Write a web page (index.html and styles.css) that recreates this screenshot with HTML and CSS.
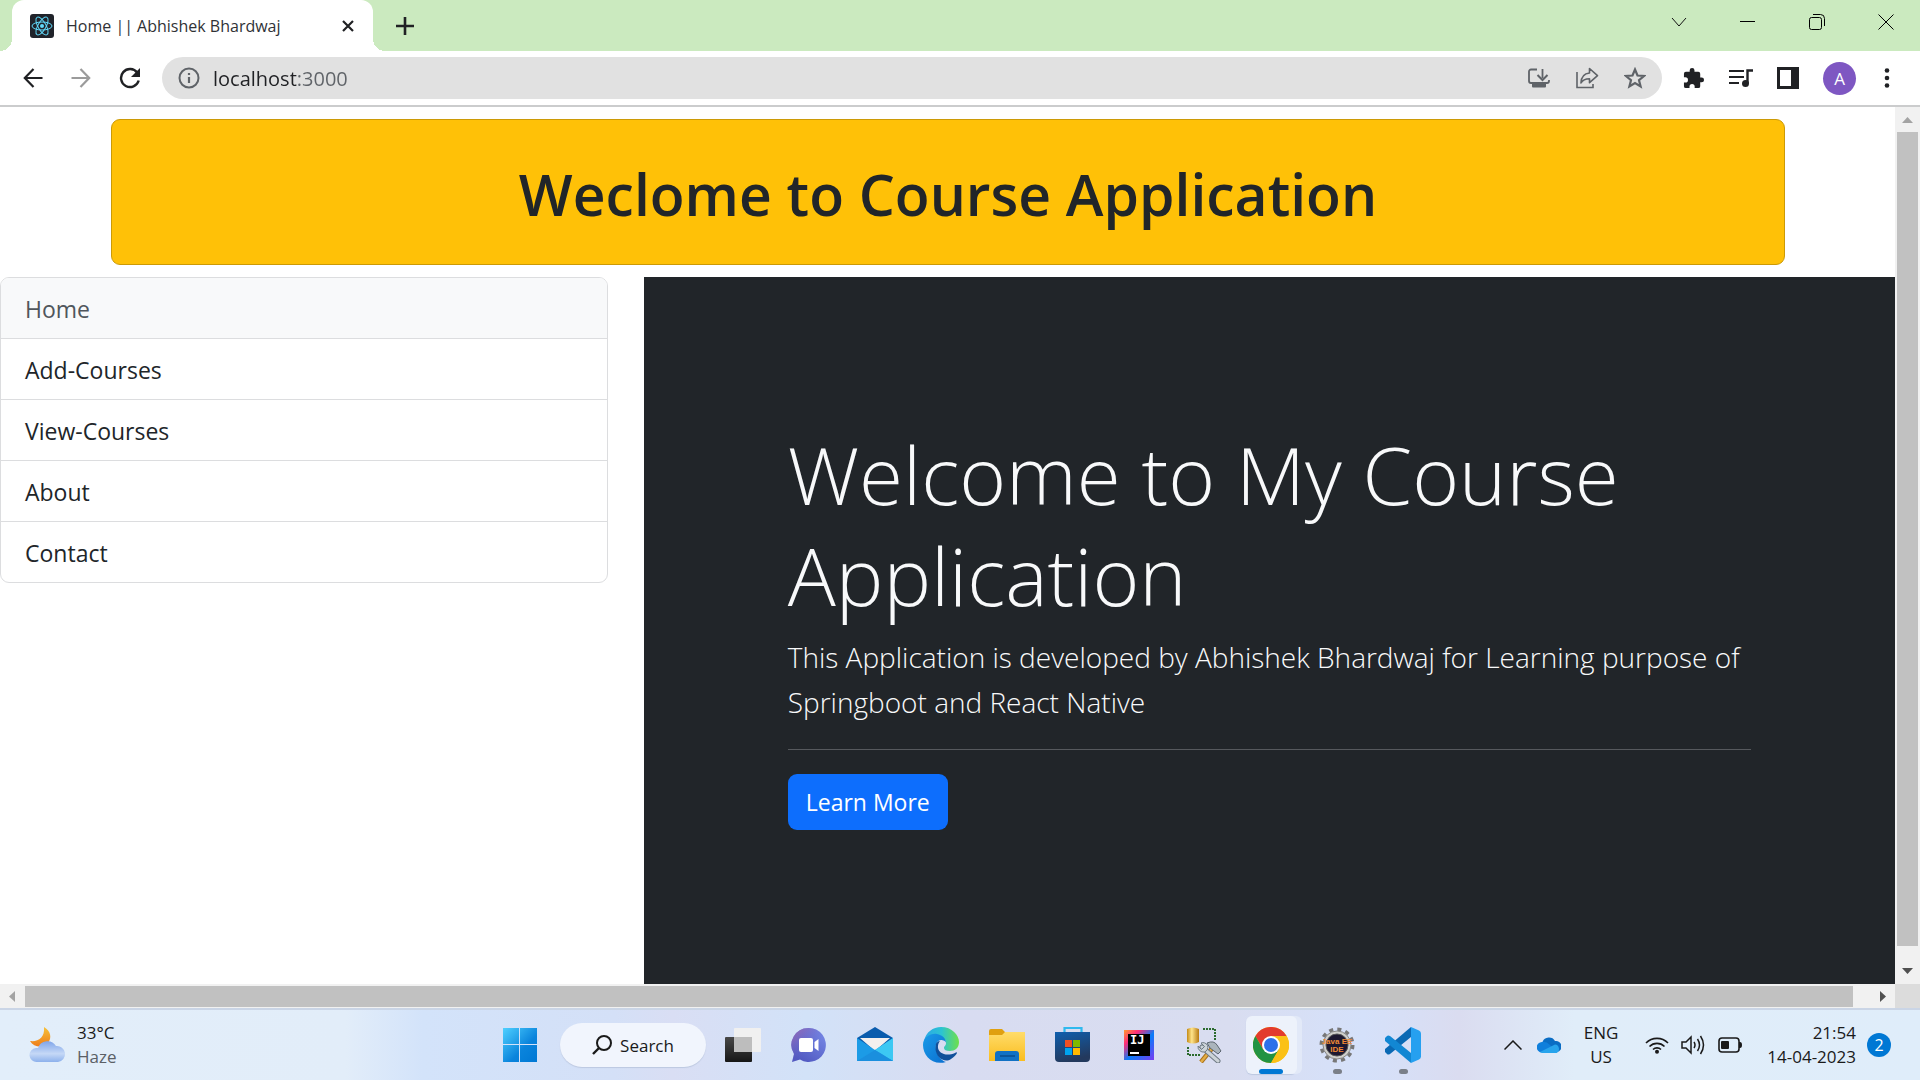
FILE: index.html
```html
<!DOCTYPE html>
<html lang="en">
<head>
<meta charset="utf-8">
<title>Home || Abhishek Bhardwaj</title>
<link rel="stylesheet" href="styles.css">
</head>
<body>
<div class="desktop">
  <header class="browser">
    <div class="tabstrip">
      <div class="tab">
        <svg class="favicon" viewBox="0 0 24 24" aria-hidden="true"><rect width="24" height="24" rx="3" fill="#20232a"/><g fill="none" stroke="#61dafb" stroke-width="1"><ellipse cx="12" cy="12" rx="10" ry="4"/><ellipse cx="12" cy="12" rx="10" ry="4" transform="rotate(60 12 12)"/><ellipse cx="12" cy="12" rx="10" ry="4" transform="rotate(120 12 12)"/></g><circle cx="12" cy="12" r="2" fill="#61dafb"/></svg>
        <span class="tab-title">Home || Abhishek Bhardwaj</span>
        <button class="icon-btn" aria-label="Close tab"><svg width="14" height="14" viewBox="0 0 14 14"><path d="M2 2l10 10M12 2L2 12" stroke="#202124" stroke-width="2.2" fill="none"/></svg></button>
      </div>
      <button class="icon-btn new-tab" aria-label="New tab"><svg width="20" height="20" viewBox="0 0 20 20"><path d="M10 1v18M1 10h18" stroke="#202124" stroke-width="2.6" fill="none"/></svg></button>
      <div class="window-buttons">
        <button class="win-btn" aria-label="Search tabs"><svg width="16" height="16" viewBox="0 0 16 16"><path d="M1 4l7 8 7-8" stroke="#111" fill="none"/></svg></button>
        <button class="win-btn" aria-label="Minimize"><svg width="16" height="16" viewBox="0 0 16 16"><path d="M0 7.500h15" stroke="#000" fill="none"/></svg></button>
        <button class="win-btn" aria-label="Restore"><svg width="16" height="16" viewBox="0 0 16 16"><g stroke="#000" fill="none"><rect x=".5" y="3.500" width="12" height="12" rx="2"/><path d="M4 .5h7.500a4 4 0 0 1 4 4V12"/></g></svg></button>
        <button class="win-btn" aria-label="Close"><svg width="16" height="16" viewBox="0 0 16 16"><path d="M.5.500l15 15M15.500.500l-15 15" stroke="#000" fill="none"/></svg></button>
      </div>
    </div>
    <div class="toolbar">
      <div class="nav-buttons">
        <button class="icon-btn" aria-label="Back"><svg width="20" height="20" viewBox="0 0 20 20"><path d="M19.500 10H2M10.500 1L1.800 10l8.700 9" stroke="#202124" stroke-width="2.200" fill="none"/></svg></button>
        <button class="icon-btn" aria-label="Forward"><svg width="20" height="20" viewBox="0 0 20 20"><path d="M.5 10H18M9.500 1l8.700 9-8.700 9" stroke="#9b9b9b" stroke-width="2.200" fill="none"/></svg></button>
        <button class="icon-btn" aria-label="Reload"><svg width="22" height="22" viewBox="0 0 22 22"><path d="M18.300 5.700A9 9 0 1 0 19.700 13.500" stroke="#202124" stroke-width="2.400" fill="none"/><path d="M21 1v9h-9z" fill="#202124"/></svg></button>
      </div>
      <div class="omnibox">
        <svg width="22" height="22" viewBox="0 0 22 22" aria-hidden="true"><circle cx="11" cy="11" r="9.500" stroke="#5f6368" stroke-width="2" fill="none"/><path d="M11 10v6M11 6v2" stroke="#5f6368" stroke-width="2.200"/></svg>
        <input class="address" aria-label="Address" value="localhost:3000">
        <button class="icon-btn" aria-label="Install app"><svg width="22" height="22" viewBox="0 0 22 22"><path d="M9 2.500H3a2 2 0 0 0-2 2V14a2 2 0 0 0 2 2h16a2 2 0 0 0 2-2v-1M14.500 2v9" stroke="#5f6368" stroke-width="1.800" fill="none"/><path d="M9.500 8l5 5 5-5" stroke="#5f6368" stroke-width="2" fill="none"/><path d="M4 17h14v2.500a1 1 0 0 1-1 1H5a1 1 0 0 1-1-1z" fill="#5f6368"/></svg></button>
        <button class="icon-btn" aria-label="Share"><svg width="24" height="22" viewBox="0 0 24 22"><path d="M2 5v15.500h16V17" stroke="#5f6368" stroke-width="1.600" fill="none"/><path d="M14.500 1.500l8 7.200-8 7v-4c-4.500 0-7 1.300-8.500 4.300.2-5.500 3-9.500 8.500-10z" stroke="#5f6368" stroke-width="1.600" fill="none" stroke-linejoin="round"/></svg></button>
        <button class="icon-btn" aria-label="Bookmark"><svg width="22" height="22" viewBox="0 0 22 22"><path d="M11 2.500l2.500 6 6.500.5-5 4.200 1.600 6.300L11 16.100l-5.600 3.400L7 13.200 2 9l6.500-.5z" stroke="#5f6368" stroke-width="2.200" fill="none"/></svg></button>
      </div>
      <div class="actions">
        <button class="icon-btn" aria-label="Extensions"><svg width="22" height="22" viewBox="1 0 23 23"><path fill="#202124" d="M20.500 11H19V7a2 2 0 0 0-2-2h-4V3.500a2.500 2.500 0 0 0-5 0V5H4a2 2 0 0 0-2 2v3.800h1.500a2.700 2.700 0 0 1 0 5.400H2V20a2 2 0 0 0 2 2h3.800v-1.500a2.700 2.700 0 0 1 5.400 0V22H17a2 2 0 0 0 2-2v-4h1.500a2.500 2.500 0 0 0 0-5z"/></svg></button>
        <button class="icon-btn" aria-label="Media controls"><svg width="24" height="20" viewBox="0 0 24 20"><path d="M0 3h15M0 9h15M0 15h10" stroke="#202124" stroke-width="2"/><path d="M18.500 15V2.500H24" stroke="#202124" stroke-width="2.400" fill="none"/><circle cx="16.500" cy="15.500" r="3.500" fill="#202124"/></svg></button>
        <button class="icon-btn" aria-label="Side panel"><svg width="22" height="22" viewBox="0 0 22 22"><path fill="#202124" fill-rule="evenodd" d="M0 0h22v22H0zM3 3v16h11V3z"/></svg></button>
        <button class="icon-btn avatar" aria-label="Profile">A</button>
        <button class="icon-btn" aria-label="Menu"><svg width="6" height="20" viewBox="0 0 6 20"><g fill="#202124"><circle cx="3" cy="2.500" r="2.300"/><circle cx="3" cy="10" r="2.300"/><circle cx="3" cy="17.500" r="2.300"/></g></svg></button>
      </div>
    </div>
  </header>

  <div class="viewport">
    <main class="page">
      <div class="banner"><h1>Weclome to Course Application</h1></div>
      <div class="columns">
        <nav class="menu">
          <a class="current" href="#home">Home</a>
          <a href="#add">Add-Courses</a>
          <a href="#view">View-Courses</a>
          <a href="#about">About</a>
          <a href="#contact">Contact</a>
        </nav>
        <section class="hero">
          <h2>Welcome to My Course Application</h2>
          <p>This Application is developed by Abhishek Bhardwaj for Learning purpose of Springboot and React Native</p>
          <hr>
          <button class="learn">Learn More</button>
        </section>
      </div>
    </main>
    <div class="scroll-y">
      <svg width="25" height="25" viewBox="0 0 25 25"><path d="M7 16l5.500-6L18 16z" fill="#a3a3a3"/></svg>
      <div class="thumb"></div>
      <svg width="25" height="25" viewBox="0 0 25 25"><path d="M7 9l5.500 6L18 9z" fill="#505050"/></svg>
    </div>
    <div class="scroll-x">
      <svg width="25" height="24" viewBox="0 0 25 24"><path d="M15 7l-6 5.500 6 5.500z" fill="#a3a3a3"/></svg>
      <div class="thumb"></div>
      <svg width="25" height="24" viewBox="0 0 25 24"><path d="M10 7l6 5.500-6 5.500z" fill="#505050"/></svg>
    </div>
    <div class="corner"></div>
  </div>

  <footer class="taskbar">
    <div class="weather">
      <svg width="38" height="38" viewBox="0 0 38 38" aria-hidden="true"><defs><linearGradient id="moon" x2="0" y2="1"><stop offset="0" stop-color="#f6c23a"/><stop offset="1" stop-color="#ee7d1b"/></linearGradient><linearGradient id="cloud" x2="0" y2="1"><stop offset="0" stop-color="#7fa5ea"/><stop offset=".6" stop-color="#c5d8f6"/><stop offset="1" stop-color="#8db1ec"/></linearGradient></defs><path d="M15 1c7 4 8 11 4 16S5 22 1 15c8 1 15-3 14-14z" fill="url(#moon)"/><path d="M8 36a7 7 0 0 1-1-14h2a10 10 0 0 1 18-2 8 8 0 0 1 2 16z" fill="url(#cloud)"/></svg>
      <div class="stack"><span>33°C</span><span class="muted">Haze</span></div>
    </div>
    <div class="apps">
      <button class="app" aria-label="Start"><svg width="36" height="36" viewBox="0 0 36 36"><defs><linearGradient id="win" x2="1" y2="1"><stop offset="0" stop-color="#4fd0ff"/><stop offset=".6" stop-color="#0a84dc"/><stop offset="1" stop-color="#0078d4"/></linearGradient></defs><path fill="url(#win)" d="M1 1h16v16H1zM18 1h17v16H18zM1 18h16v17H1zM18 18h17v17H18z"/></svg></button>
      <button class="search"><svg width="20" height="20" viewBox="0 0 20 20" aria-hidden="true"><circle cx="12" cy="8" r="7" stroke="#1a1a1a" stroke-width="2" fill="none"/><path d="M7 13l-6 6" stroke="#1a1a1a" stroke-width="2.400"/></svg>Search</button>
      <button class="app" aria-label="Task view"><svg width="36" height="36" viewBox="0 0 36 36"><defs><linearGradient id="dk" x2="0" y2="1"><stop offset="0" stop-color="#484848"/><stop offset="1" stop-color="#161616"/></linearGradient></defs><rect y="10" width="27" height="25" rx="1" fill="url(#dk)"/><rect x="9" y="1" width="27" height="24" rx="1" fill="#f0f0f0"/><path d="M9 10h18v15H9z" fill="#bdbdbd"/></svg></button>
      <button class="app" aria-label="Chat"><svg width="36" height="36" viewBox="0 0 36 36"><defs><linearGradient id="ch" x1="1" x2="0.300" y2="1"><stop offset="0" stop-color="#7b8feb"/><stop offset="1" stop-color="#5058c0"/></linearGradient><linearGradient id="ch2" x2="1" y2="1"><stop offset="0" stop-color="#a268ae"/><stop offset=".6" stop-color="#5b5fc7" stop-opacity="0"/></linearGradient></defs><path d="M18 1a17 17 0 1 1-9 31.500L1 35l2-8A17 17 0 0 1 18 1z" fill="url(#ch)"/><path d="M18 1a17 17 0 1 1-9 31.500L1 35l2-8A17 17 0 0 1 18 1z" fill="url(#ch2)"/><rect x="8" y="11" width="14" height="14" rx="2" fill="#fff"/><path d="M23.500 15l4-3v12l-4-3z" fill="#fff"/></svg></button>
      <button class="app" aria-label="Mail"><svg width="36" height="36" viewBox="0 0 36 36"><path d="M0 11L18 0l18 11v10H0z" fill="#0a5cad"/><path d="M3 11h30L18 24z" fill="#f4f0ee"/><path d="M0 11l18 12 18-12v23H0z" fill="#1c9be6"/><path d="M36 11v23L18 23z" fill="#3cc8f3"/><path d="M0 34l18-11 18 11z" fill="#1a8fde"/></svg></button>
      <button class="app" aria-label="Edge"><svg width="36" height="36" viewBox="0 0 36 36"><defs><linearGradient id="e1" x2="1"><stop offset="0" stop-color="#2aa8e8"/><stop offset=".5" stop-color="#2cc3d2"/><stop offset="1" stop-color="#6ee04a"/></linearGradient><linearGradient id="e2" y2="1"><stop offset="0" stop-color="#1a9be8"/><stop offset="1" stop-color="#0a6fd0"/></linearGradient></defs><path d="M1 14C3 5 10 0 18 0c11 0 18 8 18 15 0 6-4 9-9 9-4 0-6-1-6-3s2-2 2-5c0-4-4-6-8-6-8 0-13 5-14 8z" fill="url(#e1)"/><path d="M0 18c0-8 8-12 14-11 5 1 9 4 9 9 0-2-3-3-5-3-3 0-6 4-5 9 1 7 6 12 10 13C9 39 0 28 0 18z" fill="url(#e2)"/><path d="M13 17c-3 12 8 20 15 15 3-2 5-4 6-6 0-1-1-1-2 0-9 4-18 0-17-7 0-3 2-5 2-5-2 0-4 2-4 3z" fill="#10509a"/></svg></button>
      <button class="app" aria-label="File Explorer"><svg width="36" height="36" viewBox="0 0 36 36"><defs><linearGradient id="fo" x2="0" y2="1"><stop offset="0" stop-color="#ffdc6a"/><stop offset="1" stop-color="#fabd1f"/></linearGradient></defs><path d="M0 4a2 2 0 0 1 2-2h11l3 3h18a2 2 0 0 1 2 2v6H0z" fill="#e0a010"/><path d="M0 8h13l3-3h20v29H0z" fill="url(#fo)"/><path d="M6 34V27a3 3 0 0 1 3-3h18a3 3 0 0 1 3 3v7z" fill="#1171c4"/><path d="M11 29h15" stroke="#0a4d8c" stroke-width="1.500"/></svg></button>
      <button class="app" aria-label="Store"><svg width="36" height="36" viewBox="0 0 36 36"><defs><linearGradient id="st" x2=".3" y2="1"><stop offset="0" stop-color="#0f5fae"/><stop offset="1" stop-color="#23395d"/></linearGradient></defs><path d="M9.500 6V1h17v5" fill="none" stroke="#2fb9ee" stroke-width="2.200"/><path d="M0 5h35v26a4 4 0 0 1-4 4H4a4 4 0 0 1-4-4z" fill="url(#st)"/><path d="M10 13h7v7h-7z" fill="#f25022"/><path d="M18 13h7v7h-7z" fill="#7fba00"/><path d="M10 21h7v7h-7z" fill="#00a4ef"/><path d="M18 21h7v7h-7z" fill="#ffb900"/></svg></button>
      <button class="app" aria-label="IntelliJ IDEA"><span class="intellij"><span>IJ</span></span></button>
      <button class="app" aria-label="Database tools"><svg width="36" height="36" viewBox="0 0 36 36"><defs><linearGradient id="db" x2="1"><stop offset="0" stop-color="#c48a15"/><stop offset=".4" stop-color="#ffe48a"/><stop offset="1" stop-color="#b87a10"/></linearGradient></defs><path d="M0 2q6-3 12 0v13q-6 3-12 0z" fill="url(#db)"/><path d="M16 2h12v12M1 20v8h12" fill="none" stroke="#2c6b2f" stroke-width="2" stroke-dasharray="2 1"/><path d="M27 19L14 35" stroke="#a8701a" stroke-width="4.500"/><path d="M27 19L14 35" stroke="#e3ad45" stroke-width="2.500"/><path d="M15 20l16 14" stroke="#6f7a84" stroke-width="5" stroke-linecap="round"/><path d="M15 20l16 14" stroke="#ccd3d8" stroke-width="3" stroke-linecap="round"/><path d="M14 16l3.500 3.500-3 3L11 19a5.500 5.500 0 0 0 6.500 6 5 5 0 0 0 3-6.500A5 5 0 0 0 14 16z" fill="#ccd3d8" stroke="#6f7a84"/><path d="M20 16q7-3 10 2l4 6-3 3-8-6z" fill="#aab4bc" stroke="#5c6670"/></svg></button>
      <button class="app active" aria-label="Chrome"><svg width="36" height="36" viewBox="0 0 36 36"><circle cx="18" cy="18" r="18" fill="#fbc116"/><path d="M2.400 9A18 18 0 0 1 33.600 9H18L10.200 22.500z" fill="#e33b2e"/><path d="M2.400 9A18 18 0 0 0 18 36l7.800-13.500H10.200z" fill="#229342"/><path d="M33.600 9A18 18 0 0 1 18 36l7.800-13.500L18 9z" fill="#fbc116"/><circle cx="18" cy="18" r="9" fill="#fff"/><circle cx="18" cy="18" r="7" fill="#2e71ea"/></svg></button>
      <button class="app running" aria-label="Java EE IDE"><svg width="36" height="36" viewBox="0 0 36 36"><circle cx="18" cy="18" r="15.500" fill="none" stroke="#777" stroke-width="4" stroke-dasharray="4 4.100"/><circle cx="18" cy="18" r="14" fill="#cfcfcb" stroke="#888"/><circle cx="18" cy="18" r="11" fill="#1d1830" stroke="#555"/><text x="18" y="17" class="gear-text">Java EE</text><text x="18" y="25" class="gear-text">IDE</text></svg></button>
      <button class="app running" aria-label="Visual Studio Code"><svg width="36" height="36" viewBox="0 0 36 36"><path d="M26 0v10L5 27q-2 1-3 0l-2-2q-1-1 0-3z" fill="#0a69b4"/><path d="M26 36V26L5 9Q3 8 2 9l-2 2q-1 1 0 3z" fill="#1287d3"/><path d="M26 0l8 3.500q2 1 2 3v23q0 2-2 3L26 36z" fill="#26a0f0"/></svg></button>
    </div>
    <div class="tray">
      <button class="icon-btn" aria-label="Hidden icons"><svg width="18" height="10" viewBox="0 0 18 10"><path d="M.5 9.500L9 1l8.500 8.500" stroke="#1a1a1a" stroke-width="1.500" fill="none"/></svg></button>
      <svg class="cloud" width="24" height="16" viewBox="0 0 24 16" aria-hidden="true"><path d="M6 15a5.500 5.500 0 0 1-.5-10A7 7 0 0 1 18 4a5.500 5.500 0 0 1 2 11z" fill="#0a6dc4"/><path d="M5 15.500A5 5 0 0 1 5 5q4-1 8 3l7 7.500z" fill="#0f7fdc"/><path d="M3 15l15-7.500a4.500 4.500 0 0 1 1.500 8.500H5z" fill="#28a4ec"/></svg>
      <div class="stack center lang"><span>ENG</span><span>US</span></div>
      <div class="status">
        <svg width="24" height="18" viewBox="0 0 24 18" aria-hidden="true"><g fill="none" stroke="#1a1a1a" stroke-width="1.600"><path d="M1 7a15.500 15.500 0 0 1 22 0M4.500 10.500a10.500 10.500 0 0 1 15 0M8 13.500a5.800 5.800 0 0 1 8 0"/></g><circle cx="12" cy="15.800" r="2" fill="#1a1a1a"/></svg>
        <svg width="25" height="20" viewBox="0 0 25 20" aria-hidden="true"><g fill="none" stroke="#1a1a1a" stroke-width="1.500"><path d="M1 7h4l5-5v16l-5-5H1z"/><path d="M13 7q2 3 0 6M16.500 4q4 6 0 12M19.500 1q6 9 0 18"/></g></svg>
        <svg width="24" height="16" viewBox="0 0 24 16" aria-hidden="true"><rect x="1" y="1" width="20" height="14" rx="3" fill="none" stroke="#1a1a1a" stroke-width="1.600"/><rect x="3" y="4" width="8" height="8" rx="1" fill="#1a1a1a"/><path d="M21 5h1q2 0 2 3t-2 3h-1z" fill="#1a1a1a"/></svg>
      </div>
      <div class="stack end clock"><span>21:54</span><span>14-04-2023</span></div>
      <span class="badge">2</span>
    </div>
  </footer>
</div>
</body>
</html>
```
FILE: styles.css
```css
* { box-sizing: border-box; }
body { margin: 0; font-family: "Open Sans", "Noto Sans", sans-serif; color: #212529; background: #fff; }
button { font: inherit; color: inherit; }

.desktop { display: grid; grid-template-rows: auto minmax(0, 1fr) auto; height: 100vh; }

/* Browser chrome */
.tabstrip { display: flex; align-items: flex-start; height: 51px; background: #cbeabf; }
.tab { position: relative; display: flex; align-items: center; gap: 12px; width: 361px; height: 51px; margin-left: 12px; padding: 0 18px; background: #fff; border-radius: 12px 12px 0 0; }
.tab::before, .tab::after { content: ""; position: absolute; bottom: 0; width: 12px; height: 12px; }
.tab::before { left: -12px; background: radial-gradient(circle at 0 0, #cbeabf 12px, #fff 12px); }
.tab::after { right: -12px; background: radial-gradient(circle at 100% 0, #cbeabf 12px, #fff 12px); }
.favicon { width: 24px; height: 24px; flex: none; }
.tab-title { flex: 1; font-size: 16px; white-space: nowrap; color: #303236; }
.icon-btn { display: flex; align-items: center; justify-content: center; flex: none; padding: 0; border: 0; background: none; }
.new-tab { height: 51px; margin-left: 22px; }
.window-buttons { display: flex; margin-left: auto; }
.win-btn { display: flex; align-items: center; justify-content: center; width: 69px; height: 43px; padding: 0; border: 0; background: none; }

.toolbar { display: flex; align-items: center; height: 56px; padding: 0 30px 0 23px; border-bottom: 2px solid #cbcccd; }
.nav-buttons { display: flex; align-items: center; gap: 28px; }
.omnibox { display: flex; flex: 1; align-items: center; gap: 25px; height: 42px; margin: 0 21px; padding: 0 16px; border-radius: 21px; background: #e1e1e1; }
.address { flex: 1; min-width: 0; margin-left: -12px; padding: 0; border: 0; outline: 0; font: inherit; font-size: 20px; -webkit-text-fill-color: transparent; background: linear-gradient(90deg, #202124 84px, #5f6368 84px); -webkit-background-clip: text; background-clip: text; }
.actions { display: flex; align-items: center; gap: 24px; }
.avatar { width: 33px; height: 33px; margin-right: 4px; border-radius: 50%; background: #7e57c2; color: #fff; font-size: 17px; }

/* Page */
.viewport { display: grid; grid-template-columns: minmax(0, 1fr) 25px; grid-template-rows: minmax(0, 1fr) 24px; }
.page { display: flex; flex-direction: column; gap: 12px; padding-top: 12px; overflow: hidden; background: #fff; }
.banner { display: flex; justify-content: center; margin: 0 110px 0 111px; padding: 38px 24px 34px; border: 1px solid #cc9a06; border-radius: 9px; background: #ffc107; }
.banner h1 { margin: 0; font-size: 57px; line-height: 72px; font-weight: 600; }
.columns { display: grid; flex: 1; grid-template-columns: 17fr 35fr; gap: 36px; }
.menu { display: flex; flex-direction: column; align-self: start; border: 1px solid #dcdddf; border-radius: 9px; overflow: hidden; }
.menu a { padding: 13px 24px 11px; font-size: 23px; line-height: 36px; color: #212529; text-decoration: none; }
.menu a + a { border-top: 1px solid #dcdddf; }
.menu .current { background: #f8f9fa; color: #50565c; }
.hero { padding: 144px; background: #212529; color: #f8f9fa; }
.hero h2 { margin: 2px 0 10px; font-size: 80px; line-height: 101px; font-weight: 300; }
.hero p { margin: 0; font-size: 28px; line-height: 45px; font-weight: 300; }
.hero hr { margin: 24px 0; border: 0; border-top: 1px solid #56595d; }
.learn { height: 56px; padding: 0 18px; border: 0; border-radius: 9px; background: #0d6efd; color: #fff; font-size: 23px; }

/* Scrollbars */
.scroll-y, .scroll-x { display: flex; background: #f1f1f1; }
.scroll-y { flex-direction: column; }
.scroll-x .thumb, .scroll-y .thumb { background: #c1c1c1; }
.scroll-y .thumb { flex: 1; margin: 0 2px 13px; }
.scroll-x .thumb { flex: 1; margin: 2px 17px 1px 0; }
.corner { background: #dcdcdc; }

/* Taskbar */
.taskbar { display: grid; grid-template-columns: 1fr auto 1fr; align-items: center; height: 72px; border-top: 2px solid #cad5e6; background: linear-gradient(90deg, #e2eefa 0, #e2edf9 18%, #d3e3fa 22%, #d4e0f7 32%, #d9def4 35%, #d2e2f8 42%, #d8dcf1 50%, #d9ddf0 64%, #d5e1fa 71%, #dadcf0 76%, #e0edf9 82%, #dfedfa 100%); font-size: 17px; color: #1a1a1a; }
.weather { display: flex; align-items: center; gap: 10px; padding-left: 29px; }
.stack { display: flex; flex-direction: column; line-height: 24px; white-space: nowrap; }
.center { align-items: center; }
.end { align-items: flex-end; }
.muted { color: #5b6066; }
.apps { display: flex; align-items: center; padding-left: 3px; }
.app { position: relative; display: flex; align-items: center; justify-content: center; width: 66px; height: 60px; padding: 0; border: 0; background: none; }
.search { display: flex; align-items: center; justify-content: center; gap: 8px; width: 146px; height: 44px; margin: 0 4px 0 7px; padding: 0; border: 0; border-radius: 22px; background: #f1f5fd; box-shadow: 0 1px 1px #bcc8e0; font-size: 17px; }
.intellij { display: flex; width: 30px; height: 30px; padding: 4px; background: linear-gradient(135deg, #ff9a2e, #fe2d77 25%, #087cfa 55%, #7a3cf0); }
.intellij span { position: relative; flex: 1; padding-left: 2px; background: #000; color: #fff; font: bold 12px/13px "DejaVu Sans Mono", monospace; text-align: left; }
.intellij span::after { content: ""; position: absolute; left: 2px; bottom: 2px; width: 9px; height: 2px; background: #fff; }
.gear-text { font: bold 8px "Liberation Sans", sans-serif; fill: #f08a35; text-anchor: middle; }
.active { z-index: 0; }
.active::before { content: ""; position: absolute; z-index: -1; inset: 1px 7px 1px 8px; border-radius: 6px; background: #edf2fb; box-shadow: 5px 0 0 #e2e9f8, 0 1px 1px #bcc8e0; }
.active::after, .running::after { content: ""; position: absolute; bottom: 1px; width: 9px; height: 5px; border-radius: 3px; background: #7a7f88; }
.active::after { width: 24px; background: #0078d4; }
.tray { display: flex; align-items: center; justify-content: flex-end; padding-right: 29px; }
.cloud { margin: 0 22px 0 15px; }
.lang { width: 36px; }
.status { display: flex; align-items: center; gap: 12px; margin: 0 22px 0 26px; }
.clock { width: 92px; }
.badge { width: 24px; margin-left: 11px; border-radius: 50%; background: #0078d4; color: #fff; font-size: 16px; line-height: 24px; text-align: center; }
```
